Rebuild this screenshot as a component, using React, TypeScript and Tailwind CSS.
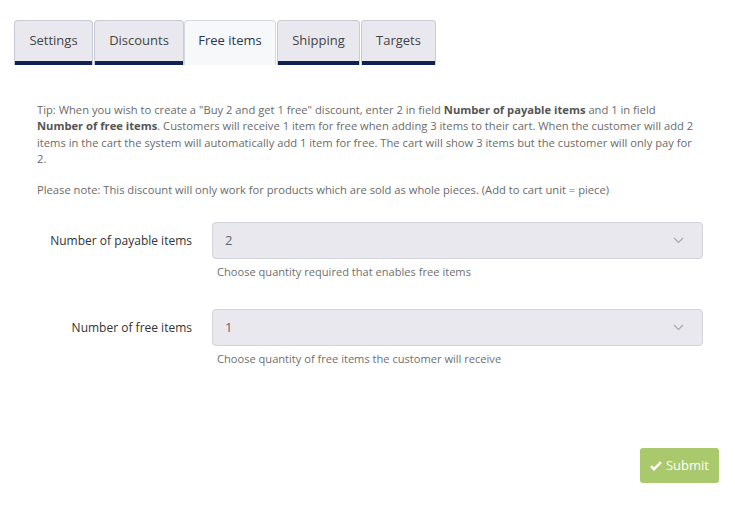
import React from "react";

const tabs: [string, number, number][] = [
  ["Settings", 79, 0],
  ["Discounts", 90, 1],
  ["Free items", 92, 0],
  ["Shipping", 83, 1],
  ["Targets", 75, 1],
];

function Chevron() {
  return (
    <svg width="11" height="7" viewBox="0 0 11 7" fill="none">
      <path d="M1 1l4.5 4.5L10 1" stroke="#a3a7b3" strokeWidth="1.1" />
    </svg>
  );
}

function SelectRow({ label, value, help }: { label: string; value: string; help: string }) {
  return (
    <div className="flex">
      <div className="w-[192px] shrink-0 pr-0 text-right text-[12px] text-[#333] pt-[10px]">{label}</div>
      <div className="ml-[20px] w-[491px]">
        <div className="h-[37px] rounded-[4px] border border-[#d3d4dc] bg-[#e9e8ee] flex items-center justify-between pl-[12px] pr-[18px] text-[13px] text-[#666]">
          <span>{value}</span>
          <Chevron />
        </div>
        <div className="pl-[5px] pt-[5px] text-[11.1px] text-[#6f6f6f]">{help}</div>
      </div>
    </div>
  );
}

export default function App() {
  return (
    <div className="w-[735px] h-[509px] bg-white relative" style={{ fontFamily: '"Open Sans", sans-serif' }}>
      <div className="flex pl-[14px] pt-[20px]">
        {tabs.map(([t, w, ml]) => {
          const active = t === "Free items";
          return (
            <div
              key={t}
              style={{ width: w, marginLeft: ml }}
              className={
                active
                  ? "h-[45px] flex items-center justify-center rounded-t-[4px] border border-b-0 border-[#d6d8e0] bg-[#f7f8fa] text-[13px] text-[#2b3656]"
                  : "h-[45px] flex items-center justify-center rounded-t-[4px] border border-b-0 border-[#c8cbd6] bg-[#e8e8ee] text-[13px] text-[#444] shadow-[inset_0_-4px_0_#0f2251]"
              }
            >
              <span className="-mt-[4px]">{t}</span>
            </div>
          );
        })}
      </div>
      <div className="pl-[37px] pr-[35px] pt-[37px] text-[11.2px] leading-[16.3px] text-[#6b6b6b]">
        <p>
          Tip: When you wish to create a "Buy 2 and get 1 free" discount, enter 2 in field{" "}
          <b className="font-bold text-[#555]">Number of payable items</b> and 1 in field{" "}
          <b className="font-bold text-[#555]">Number of free items</b>. Customers will receive 1 item for free when adding 3 items to their cart. When the customer will add 2 items in the cart the system will automatically add 1 item for free. The cart will show 3 items but the customer will only pay for 2.
        </p>
        <p className="mt-[15px]">
          Please note: This discount will only work for products which are sold as whole pieces. (Add to cart unit = piece)
        </p>
      </div>
      <div className="pt-[24px] flex flex-col gap-[28px]">
        <SelectRow label="Number of payable items" value="2" help="Choose quantity required that enables free items" />
        <SelectRow label="Number of free items" value="1" help="Choose quantity of free items the customer will receive" />
      </div>
      <div className="absolute right-[16px] top-[448px]">
        <button className="h-[35px] w-[79px] rounded-[3px] bg-[#a9c96c] text-white text-[13px] flex items-center justify-center gap-[4px]">
          <svg width="12" height="10" viewBox="0 0 12 10">
            <path d="M1 5.2l3 3L11 1.2" stroke="white" strokeWidth="2.4" fill="none" />
          </svg>
          Submit
        </button>
      </div>
    </div>
  );
}
